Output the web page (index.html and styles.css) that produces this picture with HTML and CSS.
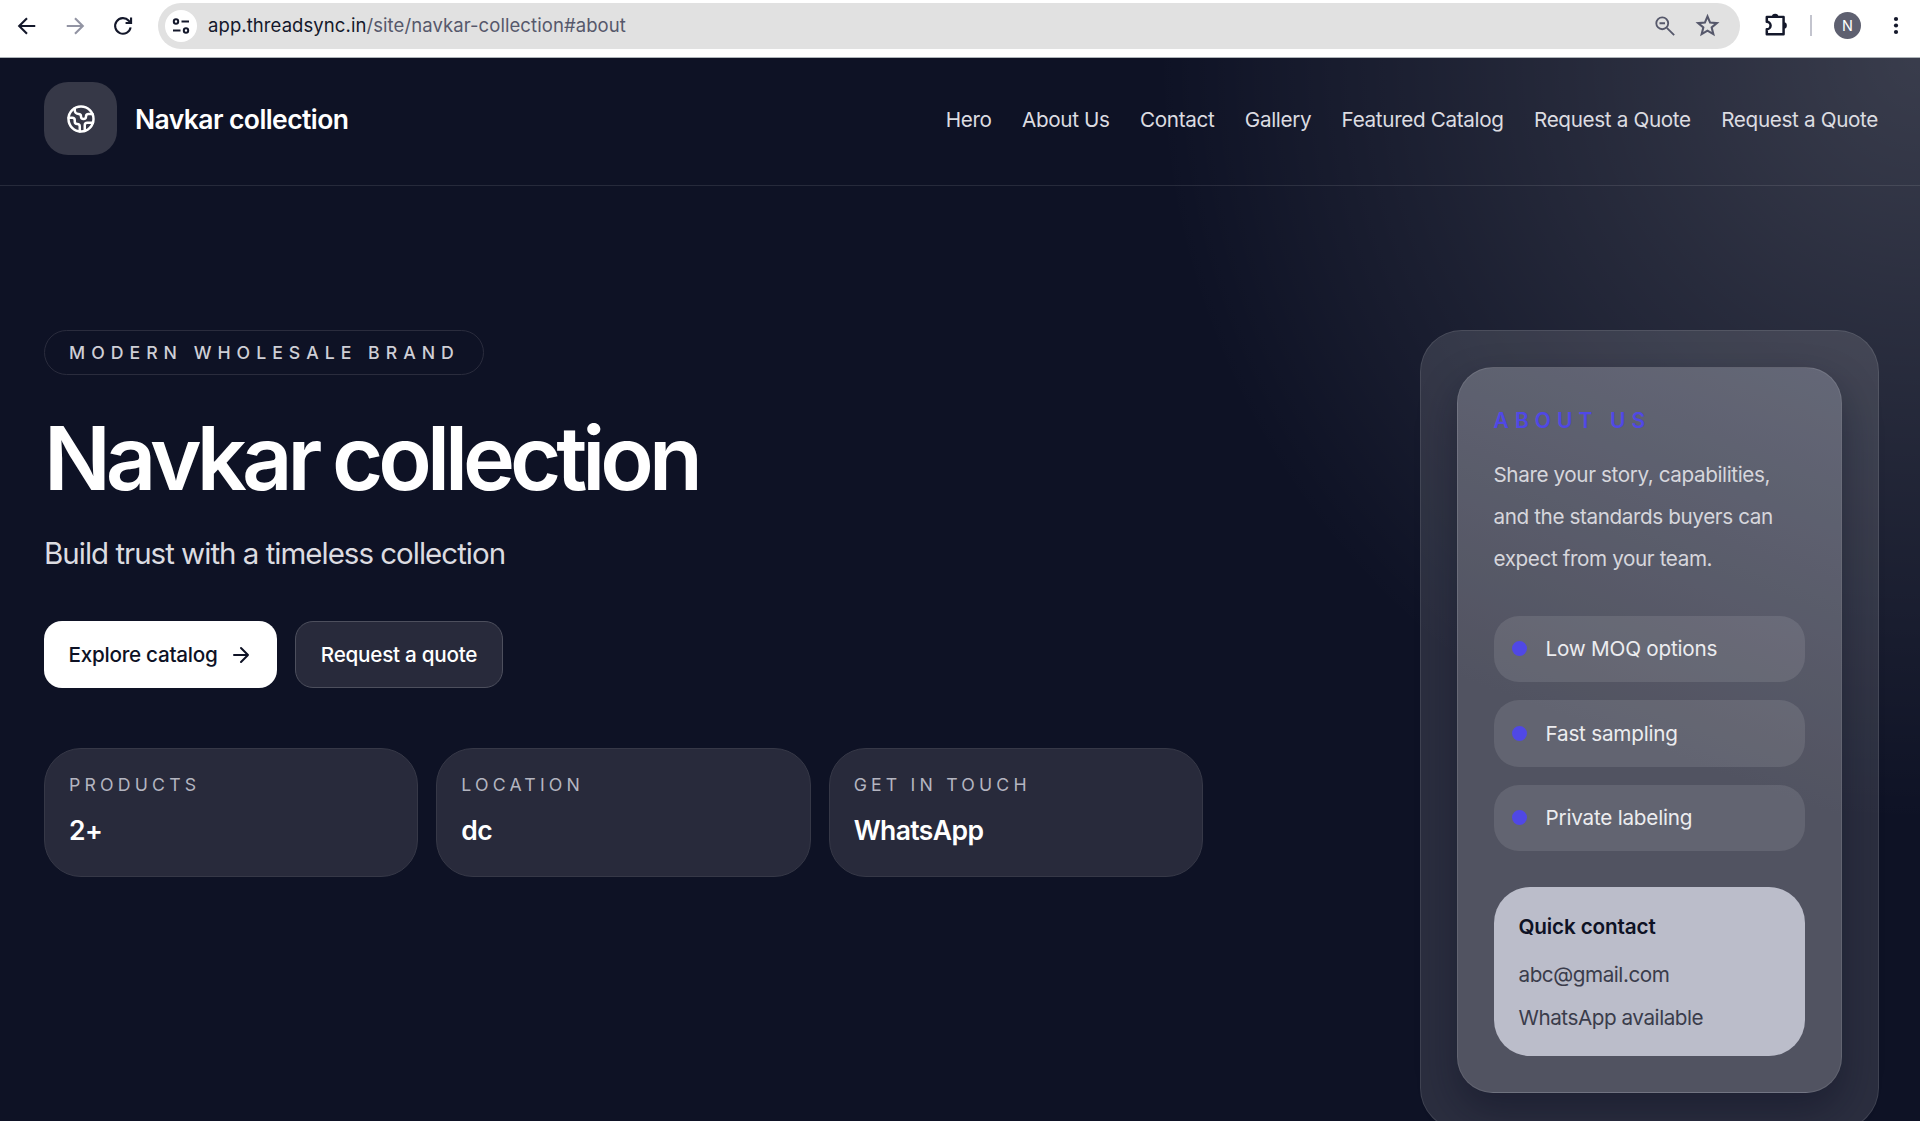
FILE: index.html
```html
<!DOCTYPE html>
<html lang="en">
<head>
<meta charset="utf-8">
<title>Navkar collection</title>
<link rel="stylesheet" href="styles.css">
</head>
<body>
<div class="browser-bar">
  <svg class="nav-icon" viewBox="0 0 24 24"><path d="M21 12H4M12 3.500 3.500 12l8.500 8.500"/></svg>
  <svg class="nav-icon muted" viewBox="0 0 24 24"><path d="M3 12h17M12 3.500 20.500 12 12 20.500"/></svg>
  <svg class="nav-icon" viewBox="0 0 24 24"><path d="M20.300 13.500a8.500 8.500 0 1 1-2-7.200L20.500 8.500M20.800 2.800v6h-6"/></svg>
  <div class="omnibox">
    <span class="site-info"><svg viewBox="0 0 20 20"><circle cx="5" cy="5.500" r="2.200"/><path d="M10.500 5.500H18M2 14.500h7.500"/><circle cx="15" cy="14.500" r="2.200"/></svg></span>
    <span class="url"><b>app.threadsync.in</b>/site/navkar-collection#about</span>
    <svg class="box-icon" viewBox="0 0 24 24"><circle cx="9" cy="9" r="6.500"/><path d="m14 14 8 8M6 9h6"/></svg>
    <svg class="box-icon star" viewBox="0 0 24 24"><path d="m12 3.200 2.500 6 6.500.500-5 4.200 1.600 6.400L12 16.900l-5.600 3.400L8 13.900 3 9.700l6.500-.5z"/></svg>
  </div>
  <svg class="puzzle" viewBox="0 0 24 24"><path d="M3.500 4.500h15.500v16H3.500v-4.500a3.300 3.300 0 0 0 0-7z"/><path class="solid" d="M8.200 4.500a3 3 0 0 1 6 0zM19 9.500a3 3 0 0 1 0 6z"/></svg>
  <span class="divider"></span>
  <span class="avatar">N</span>
  <svg class="kebab" viewBox="0 0 6 20"><circle cx="3" cy="3" r="2.100"/><circle cx="3" cy="9.500" r="2.100"/><circle cx="3" cy="16" r="2.100"/></svg>
</div>
<div class="site">
  <header class="site-header">
    <div class="brand">
      <span class="logo"><svg viewBox="0 0 24 24"><path d="M21.540 15H17a2 2 0 0 0-2 2v4.540"/><path d="M7 3.340V5a3 3 0 0 0 3 3a2 2 0 0 1 2 2c0 1.100.9 2 2 2a2 2 0 0 0 2-2c0-1.100.9-2 2-2h3.170"/><path d="M11 21.950V18a2 2 0 0 0-2-2a2 2 0 0 1-2-2v-1a2 2 0 0 0-2-2H2.050"/><circle cx="12" cy="12" r="10"/></svg></span>
      <span class="brand-name">Navkar collection</span>
    </div>
    <nav class="menu">
      <a>Hero</a><a>About Us</a><a>Contact</a><a>Gallery</a><a>Featured Catalog</a><a>Request a Quote</a><a>Request a Quote</a>
    </nav>
  </header>
  <main class="hero">
    <section class="intro">
      <span class="pill">MODERN WHOLESALE BRAND</span>
      <h1>Navkar collection</h1>
      <p class="tagline">Build trust with a timeless collection</p>
      <div class="actions">
        <a class="btn primary"><span>Explore catalog</span><svg viewBox="0 0 24 24"><path d="M5 12h14M12 5l7 7-7 7"/></svg></a>
        <a class="btn ghost">Request a quote</a>
      </div>
      <div class="stats">
        <div class="stat"><span class="label">PRODUCTS</span><strong>2+</strong></div>
        <div class="stat"><span class="label">LOCATION</span><strong>dc</strong></div>
        <div class="stat"><span class="label">GET IN TOUCH</span><strong>WhatsApp</strong></div>
      </div>
    </section>
    <aside class="panel">
      <div class="panel-inner">
        <h2>ABOUT US</h2>
        <p class="about">Share your story, capabilities,<br>and the standards buyers can<br>expect from your team.</p>
        <ul class="perks">
          <li>Low MOQ options</li>
          <li>Fast sampling</li>
          <li>Private labeling</li>
        </ul>
        <div class="contact">
          <strong>Quick contact</strong>
          <span>abc@gmail.com</span>
          <span>WhatsApp available</span>
        </div>
      </div>
    </aside>
  </main>
</div>
</body>
</html>
```

FILE: styles.css
```css
* { box-sizing: border-box; }
body {
  margin: 0;
  height: 1121px;
  overflow: hidden;
  display: flex;
  flex-direction: column;
  background: #0e1225;
  font-family: Inter, "Liberation Sans", sans-serif;
  color: #fff;
}
svg { display: block; flex: none; fill: none; stroke: currentColor; stroke-linecap: round; stroke-linejoin: round; }

/* Browser toolbar */
.browser-bar {
  flex: none;
  display: flex;
  align-items: center;
  height: 58px;
  padding: 0 0 6px 16px;
  background: #fff;
  border-bottom: 1px solid #aeb4b9;
  color: #14182b;
}
.nav-icon { width: 22px; height: 22px; margin-right: 26px; stroke-width: 2.3; stroke-linecap: butt; stroke-linejoin: miter; }
.nav-icon.muted { color: #9294a3; }
.omnibox {
  display: flex;
  align-items: center;
  width: 1582px;
  height: 46px;
  margin-left: -2px;
  padding: 0 20px 0 7px;
  border-radius: 23px;
  background: #e1e1e1;
}
.site-info { display: grid; place-items: center; width: 32px; height: 32px; border-radius: 50%; background: #fff; }
.site-info svg { width: 20px; height: 20px; stroke-width: 2; stroke-linecap: butt; }
.url { flex: 1; margin-left: 11px; padding-bottom: 1px; font-size: 18.500px; letter-spacing: .08px; color: #56586b; }
.url b { font-weight: 400; color: #14182b; }
.box-icon { width: 22px; height: 22px; color: #56586b; stroke-width: 2; stroke-linecap: butt; }
.box-icon.star { width: 25px; height: 25px; margin-left: 19px; stroke-linejoin: miter; }
.puzzle { width: 26px; height: 26px; margin: 0 0 1px 23px; stroke-width: 2.300; }
.puzzle .solid { fill: currentColor; stroke: none; }
.divider { width: 2px; height: 21px; margin-left: 21px; background: #c3c4ce; }
.avatar { display: grid; place-items: center; width: 27px; height: 27px; margin-left: 22px; border-radius: 50%; background: #5e6070; color: #fff; font-size: 14.500px; }
.kebab { width: 6px; height: 20px; margin-left: 32px; fill: currentColor; stroke: none; }

/* Page */
.site {
  flex: 1;
  min-height: 0;
  background: radial-gradient(circle 765px at 100% 0, rgba(255,255,255,.18), rgba(255,255,255,0)), #0e1225;
}
.site-header {
  display: flex;
  align-items: center;
  justify-content: space-between;
  height: 128px;
  padding: 0 42px 6px 44px;
  border-bottom: 1px solid rgba(255,255,255,.1);
}
.brand { display: flex; align-items: center; gap: 18px; }
.logo { display: grid; place-items: center; width: 73px; height: 73px; border-radius: 24px; background: #363847; }
.logo svg { width: 30px; height: 30px; stroke-width: 2; }
.brand-name { font-size: 26.500px; font-weight: 600; letter-spacing: -.58px; }
.menu { display: flex; gap: 30.400px; padding-top: 2px; font-size: 20.700px; letter-spacing: -.35px; color: #dcdce1; white-space: nowrap; }

.hero { display: flex; justify-content: space-between; padding: 144px 41.500px 0 44px; }
.intro { width: 1159px; display: flex; flex-direction: column; align-items: flex-start; }
.pill {
  height: 45px;
  padding: 0 23px 0 24px;
  border: 1px solid #2a2c3d;
  border-radius: 23px;
  font-size: 17.700px;
  font-weight: 500;
  line-height: 43px;
  letter-spacing: 6px;
  color: #cfcfd6;
  white-space: nowrap;
}
h1 { margin: 34px 0 0; font-size: 88px; font-weight: 600; line-height: 98px; letter-spacing: -5px; word-spacing: -2.500px; white-space: nowrap; }
.tagline { margin: 18px 0 0; font-size: 29.500px; line-height: 56px; letter-spacing: -1px; color: #dcdce1; }
.actions { display: flex; gap: 18px; margin-top: 40px; }
.btn { display: flex; align-items: center; height: 67px; border-radius: 18px; font-size: 20.700px; font-weight: 500; letter-spacing: -.27px; white-space: nowrap; }
.primary { gap: 11px; width: 233px; padding-left: 24.500px; background: #fff; color: #0e1225; }
.primary svg { width: 24px; height: 24px; stroke-width: 2; }
.ghost { width: 208px; justify-content: center; background: #282a3b; border: 1px solid #4d4f5d; }
.stats { display: grid; grid-template-columns: repeat(3, 1fr); gap: 18px; width: 100%; margin-top: 60px; }
.stat { display: flex; flex-direction: column; height: 129px; padding: 23px 24px; border: 1px solid #363847; border-radius: 37px; background: #282a3b; }
.label { font-size: 17.700px; line-height: 26px; letter-spacing: 4.180px; color: #b4b5c0; }
.stat strong { margin-top: 13px; font-size: 26.500px; line-height: 38px; font-weight: 600; letter-spacing: -.6px; }

.panel { width: 459px; height: 800px; padding: 36px; border: 1px solid rgba(255,255,255,.1); border-radius: 42px; background: rgba(255,255,255,.12); }
.panel-inner {
  height: 726px;
  padding: 36px;
  border: 1px solid rgba(255,255,255,.1);
  border-radius: 36px;
  background: linear-gradient(rgba(255,255,255,.19), rgba(255,255,255,.19)), linear-gradient(20deg, #292b3c 48%, #404457 100%);
  box-shadow: 0 18px 38px rgba(10,12,32,.4);
}
h2 { margin: 0; padding-top: 1px; font-size: 21px; font-weight: 600; line-height: 32px; letter-spacing: 6.100px; color: #5048e5; }
.about { margin: 17px 0 0; font-size: 20.700px; line-height: 42.200px; letter-spacing: -.4px; color: #d6d6dc; white-space: nowrap; }
.perks { display: grid; gap: 18px; margin: 35px 0 0; padding: 0; list-style: none; }
.perks li { display: flex; align-items: center; gap: 19px; height: 66.500px; padding-left: 18px; border-radius: 25px; background: rgba(255,255,255,.1); font-size: 20.700px; letter-spacing: -.22px; color: #ececef; }
.perks li::before { content: ""; width: 15px; height: 15px; border-radius: 50%; background: #5048e5; }
.contact { display: flex; flex-direction: column; height: 169px; margin-top: 36px; padding: 19px 25px; border-radius: 36px; background: #bbbdca; font-size: 20.700px; line-height: 42.200px; letter-spacing: -.46px; color: #3a3c4b; }
.contact strong { font-weight: 600; letter-spacing: -.15px; color: #0e1225; margin-bottom: 6px; }
```
